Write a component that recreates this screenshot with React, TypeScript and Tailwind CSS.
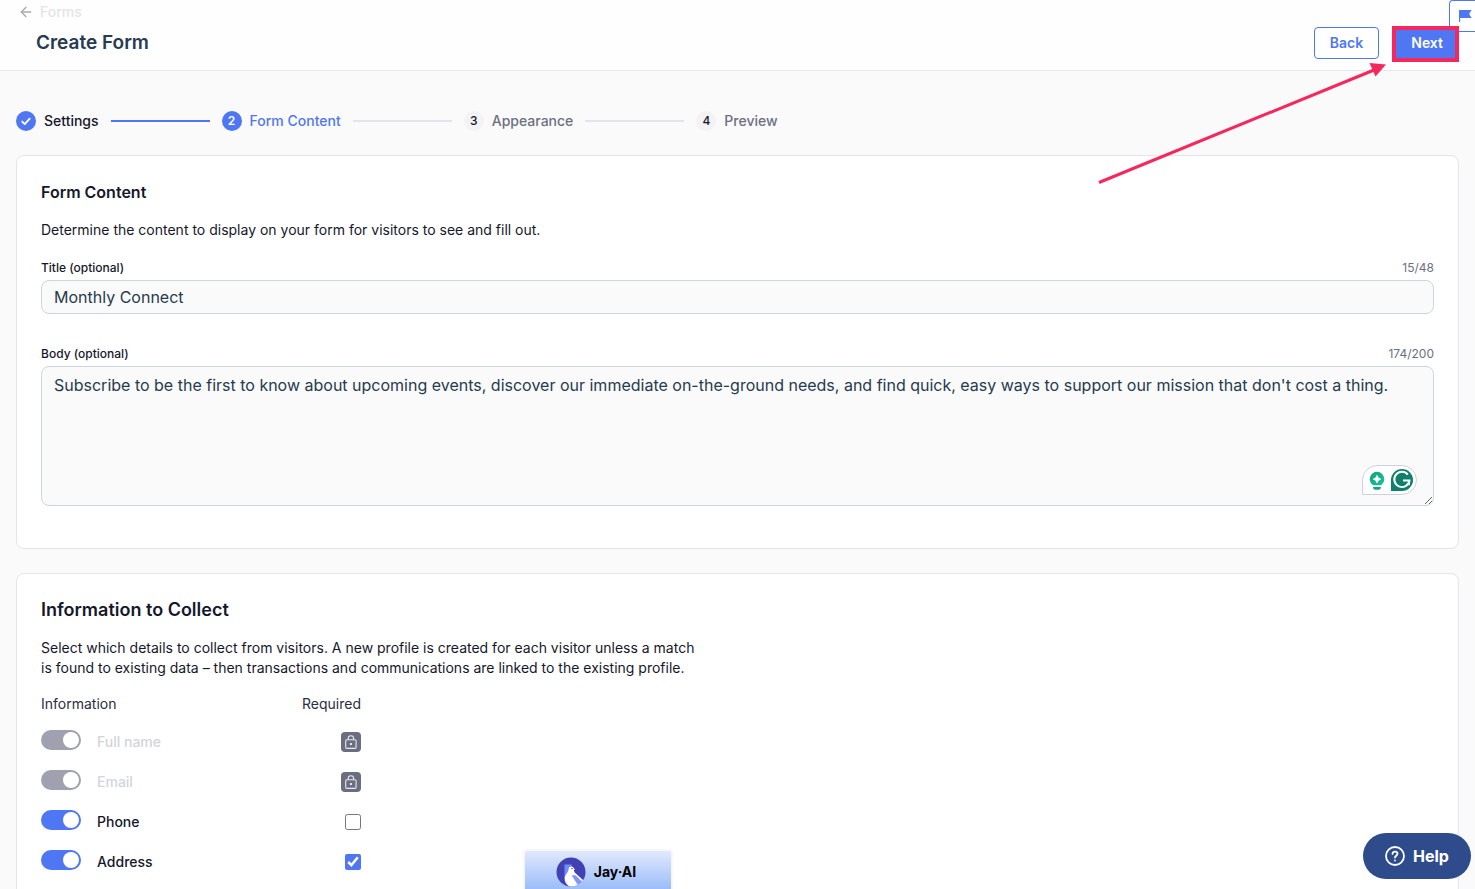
import React, { useState } from 'react';
import { ArrowLeft } from 'lucide-react';

const steps = [
  { number: 1, label: 'Settings', state: 'done' },
  { number: 2, label: 'Form Content', state: 'current' },
  { number: 3, label: 'Appearance', state: 'todo' },
  { number: 4, label: 'Preview', state: 'todo' },
];

type Field = { id: string; label: string; enabled: boolean; locked: boolean; required: boolean };

const initialFields: Field[] = [
  { id: 'full-name', label: 'Full name', enabled: true, locked: true, required: true },
  { id: 'email', label: 'Email', enabled: true, locked: true, required: true },
  { id: 'phone', label: 'Phone', enabled: true, locked: false, required: false },
  { id: 'address', label: 'Address', enabled: true, locked: false, required: true },
];

const circleStyles: Record<string, string> = {
  done: 'bg-[#4f76f3] font-semibold text-white',
  current: 'bg-[#4f76f3] font-semibold text-white',
  todo: 'bg-[#f3f3f6] font-medium text-[#15172b]',
};

const labelStyles: Record<string, string> = {
  done: 'text-[#15172b]',
  current: 'text-[#4f76f3]',
  todo: 'text-[#6c6f82]',
};

const Stepper: React.FC = () => (
  <ol className="flex items-center gap-3">
    {steps.map((step, index) => (
      <li key={step.number} className="flex items-center gap-3">
        <div className="flex items-center gap-2">
          <span className={`flex size-5 items-center justify-center rounded-full text-xs ${circleStyles[step.state]}`}>
            {step.state === 'done' ? (
              <svg viewBox="0 0 20 20" className="size-5" fill="none" stroke="currentColor" strokeWidth="1.9" strokeLinecap="round" strokeLinejoin="round">
                <path d="M6.2 10.6l2.5 2.5 5-5.4" />
              </svg>
            ) : (
              step.number
            )}
          </span>
          <span className={`text-sm font-medium ${labelStyles[step.state]}`}>{step.label}</span>
        </div>
        {index < steps.length - 1 && (
          <span className={`h-0.5 w-[99px] ${step.state === 'done' ? 'bg-[#4f76f3]' : 'bg-[#e4e4eb]'}`} />
        )}
      </li>
    ))}
  </ol>
);

const LockIcon: React.FC = () => (
  <span className="flex size-5 items-center justify-center rounded bg-[#6b6e80]">
    <svg viewBox="0 0 20 20" className="size-5" fill="none" stroke="#e9e9ee" strokeWidth="1.1" role="img" aria-label="Always required">
      <rect x="4.7" y="7.8" width="10.4" height="8.6" rx="1.2" />
      <path d="M7.2 7.8V6.4c0-1.6 1.1-2.6 2.7-2.6s2.7 1 2.7 2.6v1.4" />
      <rect x="9.5" y="11.6" width="0.9" height="0.9" />
    </svg>
  </span>
);

const GrammarlyBadge: React.FC = () => (
  <div className="absolute right-[17px] bottom-[11px] flex h-[30px] w-[55px] items-center rounded-full rounded-bl-none border border-[#d0cee2] bg-white">
    <svg viewBox="0 0 53 28" className="h-7 w-[53px]">
      <defs>
        <linearGradient id="bulb" x1="0" y1="0" x2="1" y2="1">
          <stop offset="0" stopColor="#0fa07f" />
          <stop offset="1" stopColor="#1fc29b" />
        </linearGradient>
      </defs>
      <path d="M14 5.8a7.3 7.3 0 0 1 7.3 7.3c0 2.7-1.4 4.8-3.4 6.1h-7.8c-2-1.3-3.4-3.4-3.4-6.1A7.3 7.3 0 0 1 14 5.8z" fill="url(#bulb)" />
      <path d="M14 9.2q.7 3.1 3.9 3.9-3.2.8-3.9 3.9-.7-3.1-3.9-3.9 3.2-.8 3.9-3.9z" fill="#fff" stroke="#fff" strokeWidth=".6" />
      <path d="M10 20.9h8c0 1.7-1.2 2.9-2.9 2.9h-2.2c-1.7 0-2.9-1.2-2.9-2.9z" fill="#14a483" />
      <path d="M39 3a11 11 0 1 1 0 22H28V14A11 11 0 0 1 39 3z" fill="#11806a" />
      <path d="M44.8 8.6A7.6 7.6 0 1 0 46.4 14.6H40" fill="none" stroke="#fff" strokeWidth="2" />
      <path d="M46.4 14.2l-.4 5" fill="none" stroke="#fff" strokeWidth="1.6" />
    </svg>
  </div>
);

const JayIcon: React.FC = () => (
  <svg viewBox="0 0 30 30" className="size-[30px]">
    <defs>
      <clipPath id="jay-circle">
        <circle cx="15" cy="15" r="14.5" />
      </clipPath>
    </defs>
    <g clipPath="url(#jay-circle)">
      <rect width="30" height="30" fill="#4140b4" />
      <path d="M8.5 7.5h7v9l-7 5z" fill="#6f8df5" />
      <path d="M12.6 12.2c.1-1.700 1.300-2.700 2.800-2.700 1.300 0 2.200.8 2.500 2l1.300.7-1.300.6c0 1.500.6 2.600 1.900 3.800l7.700 6.900L24 30H14c-4-2.500-5.800-6-5.300-9.600.4-3 3.700-4.700 3.900-8.200z" fill="#fff" />
      <path d="M15.5 18.200h4l7 6.800-4 4z" fill="#7d99f8" />
      <circle cx="16" cy="11.600" r=".7" fill="#222" />
    </g>
  </svg>
);

const CalloutArrow: React.FC = () => (
  <svg viewBox="0 0 290 124" className="pointer-events-none absolute top-[61px] right-[87px] z-20 h-[124px] w-[290px]" aria-hidden="true">
    <path d="M1 121.5L276 9" stroke="#f5285e" strokeWidth="3" />
    <path d="M271.5 2L288 3.5 277.5 15.5z" fill="#f5285e" />
  </svg>
);

const App: React.FC = () => {
  const [title, setTitle] = useState('Monthly Connect');
  const [body, setBody] = useState(
    "Subscribe to be the first to know about upcoming events, discover our immediate on-the-ground needs, and find quick, easy ways to support our mission that don't cost a thing."
  );
  const [fields, setFields] = useState(initialFields);

  const toggle = (id: string, key: 'enabled' | 'required') => {
    setFields((prev) => prev.map((field) => (field.id === id ? { ...field, [key]: !field[key] } : field)));
  };

  return (
    <div className="relative flex h-screen flex-col overflow-hidden bg-[#fafafa] font-['Inter',sans-serif] text-[#15172b]">
      <header className="flex shrink-0 items-start justify-between border-b border-[#e8e8ea] bg-[#fefefe] px-4 pb-[11px]">
        <div className="flex flex-col">
          <a href="#forms" className="flex h-6 items-center gap-1.5 pl-0.5 text-sm font-medium text-[#e4e4e6]">
            <ArrowLeft className="size-4 text-[#a9a9ab]" strokeWidth={2} />
            Forms
          </a>
          <h1 className="pt-1.5 pl-5 text-[19px] leading-[26px] font-semibold text-[#263b50]">Create Form</h1>
        </div>
        <div className="flex gap-4 pt-[27px]">
          <button type="button" className="h-8 rounded border border-[#4f76f3] bg-white px-[15px] text-sm font-semibold text-[#4f76f3]">
            Back
          </button>
          <div className="relative z-10">
            <button type="button" className="block h-8 rounded bg-[#4f76f3] px-4 text-sm font-semibold text-white">
              Next
            </button>
            <span className="pointer-events-none absolute -top-px right-0 -bottom-[3px] -left-[3px] border-4 border-[#f5285e]" />
          </div>
        </div>
      </header>

      <button type="button" aria-label="Feedback" className="absolute top-0 right-0 flex h-8 w-[26px] items-center rounded-l border border-r-0 border-[#4f76f3] bg-white pl-2">
        <svg viewBox="0 0 14 14" className="size-3.5" fill="#4f76f3">
          <path d="M1 1H13.2V2Q9.600 5 13.2 8V9H2.200V13H1z" />
        </svg>
      </button>
      <CalloutArrow />

      <main className="flex-1 overflow-y-auto px-4 pt-10 [scrollbar-width:none]">
        <Stepper />

        <section className="mt-6 rounded-lg border border-[#e4e4eb] bg-white px-6 pt-6 pb-[42px]">
          <h2 className="text-base font-semibold">Form Content</h2>
          <p className="mt-4 text-sm">Determine the content to display on your form for visitors to see and fill out.</p>

          <div className="mt-5 flex justify-between text-xs">
            <label htmlFor="title" className="font-medium">Title (optional)</label>
            <span className="text-[#6c6f82]">{title.length}/48</span>
          </div>
          <input
            id="title"
            type="text"
            maxLength={48}
            value={title}
            onChange={(e) => setTitle(e.target.value)}
            className="mt-1 block h-[34px] w-full rounded-lg border border-[#cbd6e0] bg-[#fafafa] px-3 text-base text-[#263b50]"
          />

          <div className="mt-8 flex justify-between text-xs">
            <label htmlFor="body" className="font-medium">Body (optional)</label>
            <span className="text-[#6c6f82]">{body.length}/200</span>
          </div>
          <div className="relative mt-1">
            <textarea
              id="body"
              maxLength={200}
              value={body}
              onChange={(e) => setBody(e.target.value)}
              className="block h-[140px] w-full rounded-lg border border-[#cbd6e0] bg-[#fafafa] px-3 py-1.5 text-base text-[#263b50]"
            />
            <GrammarlyBadge />
          </div>
        </section>

        <section className="mt-6 rounded-lg border border-[#e4e4eb] bg-white p-6">
          <h2 className="text-lg leading-6 font-semibold">Information to Collect</h2>
          <p className="mt-4 max-w-[660px] text-sm">
            Select which details to collect from visitors. A new profile is created for each visitor unless a match is
            found to existing data – then transactions and communications are linked to the existing profile.
          </p>

          <table className="mt-4 w-80 text-sm">
            <thead>
              <tr>
                <th className="p-0 pb-2 text-left font-normal text-[#2b2d40]">Information</th>
                <th className="p-0 pb-2 text-right font-normal text-[#2b2d40]">Required</th>
              </tr>
            </thead>
            <tbody>
              {fields.map((field) => (
                <tr key={field.id} className="h-10">
                  <td className="p-0">
                    <div className="flex items-center gap-4">
                      <input
                        id={field.id}
                        type="checkbox"
                        role="switch"
                        checked={field.enabled}
                        disabled={field.locked}
                        onChange={() => toggle(field.id, 'enabled')}
                        className="mb-1 flex h-5 w-10 appearance-none items-center rounded-full bg-[#9fa1b1] px-0.5 before:size-4 before:rounded-full before:bg-white before:content-[''] checked:justify-end enabled:checked:bg-[#4f76f3]"
                      />
                      <label htmlFor={field.id} className={`font-medium ${field.locked ? 'text-[#d3d4dd]' : ''}`}>
                        {field.label}
                      </label>
                    </div>
                  </td>
                  <td className="p-0">
                    <div className="flex justify-end">
                      {field.locked ? (
                        <LockIcon />
                      ) : (
                        <input
                          type="checkbox"
                          aria-label={`${field.label} required`}
                          checked={field.required}
                          onChange={() => toggle(field.id, 'required')}
                          className="size-4 accent-[#4f76f3]"
                        />
                      )}
                    </div>
                  </td>
                </tr>
              ))}
            </tbody>
          </table>
        </section>
      </main>

      <button type="button" className="absolute bottom-0 left-[525px] flex h-[38px] w-[146px] items-center justify-center gap-2 rounded-t-xs bg-linear-to-b from-[#e2e9fd] to-[#9bbdf9] pt-1 pr-1 text-sm font-bold text-black shadow-[0_0_2px_2px_#f6f6f6]">
        <JayIcon />
        Jay·AI
      </button>

      <button type="button" className="absolute right-1 bottom-2.5 flex h-[46px] w-[108px] items-center justify-center gap-2 rounded-full bg-[#2e4b8b] text-base font-bold text-white">
        <svg viewBox="0 0 20 20" className="size-5" fill="none" stroke="currentColor" strokeWidth="1.8" strokeLinecap="round">
          <circle cx="10" cy="10" r="9" />
          <path d="M7.5 7.9C7.6 6.4 8.6 5.6 10 5.6s2.5.9 2.5 2.2c0 1.8-2.5 2-2.5 3.8" />
          <path d="M10 14.4v.1" />
        </svg>
        Help
      </button>
    </div>
  );
};

export default App;
